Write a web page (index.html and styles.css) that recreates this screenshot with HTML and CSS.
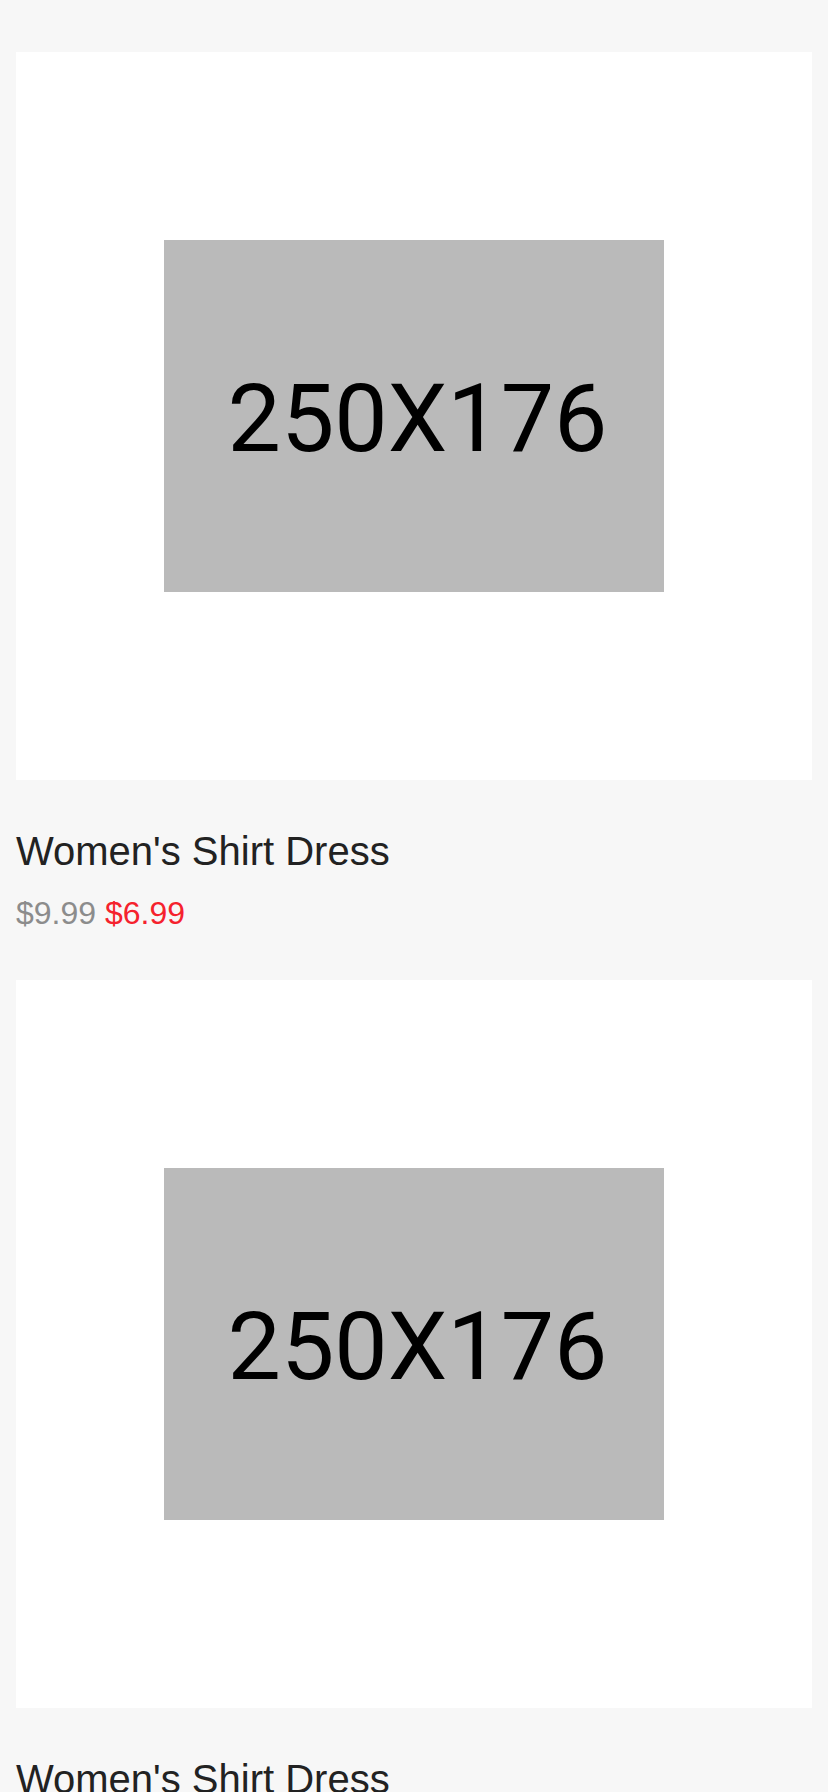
FILE: index.html
```html
<!DOCTYPE html>
<html lang="en">
<head>
<meta charset="utf-8">
<title>Products</title>
<link rel="stylesheet" href="styles.css">
</head>
<body>
<main class="list">
  <div class="product product-partial">
    <p class="price"><span class="old">$9.99</span> <span class="new">$6.99</span></p>
  </div>
  <div class="product">
    <div class="thumb"><div class="placeholder">250X176</div></div>
    <h2 class="name">Women's Shirt Dress</h2>
    <p class="price"><span class="old">$9.99</span> <span class="new">$6.99</span></p>
  </div>
  <div class="product">
    <div class="thumb"><div class="placeholder">250X176</div></div>
    <h2 class="name">Women's Shirt Dress</h2>
    <p class="price"><span class="old">$9.99</span> <span class="new">$6.99</span></p>
  </div>
</main>
</body>
</html>
```

FILE: styles.css
```css
html, body {
  margin: 0;
  padding: 0;
  background: #f7f7f7;
}
body {
  font-family: "Liberation Sans", Arial, sans-serif;
  overflow: hidden;
}
.list {
  padding: 0 16px;
  margin-top: -33px;
  display: flex;
  flex-direction: column;
  gap: 48px;
}
.product {
  display: flex;
  flex-direction: column;
}
.thumb {
  height: 728px;
  background: #fff;
  display: flex;
  align-items: center;
  justify-content: center;
}
.placeholder {
  width: 500px;
  height: 352px;
  background: #bababa;
  color: #000;
  font-family: Roboto, "Noto Sans", sans-serif;
  font-size: 95px;
  line-height: 1;
  padding: 4px 0 0 7px;
  box-sizing: border-box;
  display: flex;
  align-items: center;
  justify-content: center;
}
.name {
  margin: 48px 0 0;
  font-size: 40px;
  line-height: 46px;
  font-weight: normal;
  color: #222;
}
.price {
  margin: 21px 0 0;
  font-size: 32px;
  line-height: 37px;
}
.product-partial .price {
  margin-top: 0;
}
.old {
  color: #8c8c8c;
}
.new {
  color: #f5222d;
}
```
